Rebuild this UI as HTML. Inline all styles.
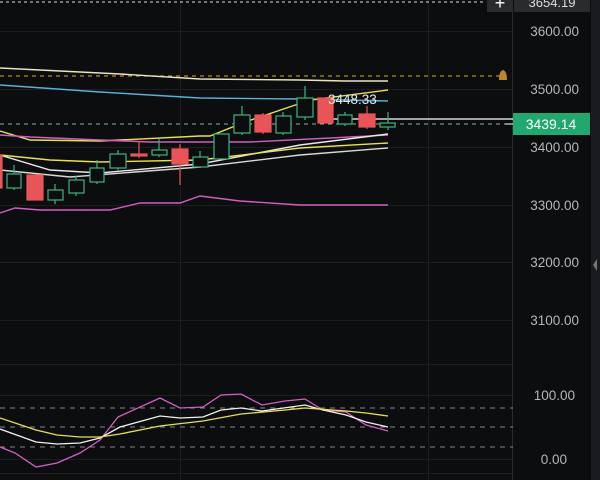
<!DOCTYPE html><html><head><style>body{margin:0;background:#0c0d0f;width:600px;height:480px;overflow:hidden;font-family:"Liberation Sans",sans-serif}</style></head><body>
<svg width="600" height="480" xmlns="http://www.w3.org/2000/svg" style="display:block">
<rect width="600" height="480" fill="#0c0d0f"/>
<g stroke="#1c1d20" stroke-width="1">
<line x1="0" y1="31.5" x2="513" y2="31.5"/><line x1="0" y1="89.5" x2="513" y2="89.5"/><line x1="0" y1="147.5" x2="513" y2="147.5"/><line x1="0" y1="205.5" x2="513" y2="205.5"/><line x1="0" y1="262.5" x2="513" y2="262.5"/><line x1="0" y1="320.5" x2="513" y2="320.5"/>
<line x1="0" y1="364.5" x2="513" y2="364.5"/><line x1="0" y1="395.5" x2="513" y2="395.5"/><line x1="0" y1="459.5" x2="513" y2="459.5"/><line x1="0" y1="473.5" x2="513" y2="473.5"/>
<line x1="180.5" y1="0" x2="180.5" y2="480"/><line x1="428.5" y1="0" x2="428.5" y2="480"/>
</g>
<line x1="512.5" y1="0" x2="512.5" y2="480" stroke="#2a2b2e"/>
<line x1="0" y1="2" x2="485" y2="2" stroke="#ddd" stroke-dasharray="3,3"/>
<rect x="487" y="-4" width="26" height="16" fill="#2a2b2e"/><text x="500" y="9" fill="#fff" font-size="18" text-anchor="middle">+</text>
<rect x="514" y="-4" width="76" height="16" fill="#2a2b2e"/><text x="552" y="7" fill="#ddd" font-size="13" text-anchor="middle">3654.19</text>
<rect x="591" y="0" width="9" height="480" fill="#1a1b1e"/><path d="M597 259 L593 265 L597 271Z" fill="#777"/>
<g fill="#b4b6ba" font-size="13.5" text-anchor="end">
<text x="579" y="36">3600.00</text><text x="579" y="94">3500.00</text><text x="579" y="152">3400.00</text><text x="579" y="210">3300.00</text><text x="579" y="267">3200.00</text><text x="579" y="325">3100.00</text><text x="575" y="400">100.00</text><text x="567" y="464">0.00</text>
</g>
<line x1="0" y1="76" x2="500" y2="76" stroke="#b8862b" stroke-dasharray="4,4" stroke-width="1.3"/>
<path d="M499 80 Q499 71 503 70 Q507 71 507 80Z" fill="#b8862b"/>
<line x1="0" y1="124" x2="513" y2="124" stroke="#7fb8a8" stroke-dasharray="4,4"/>
<g fill="none" stroke-width="1.4">
<polyline stroke="#e8e6c0" points="0,68 120,74 200,79 300,80 345,81 388,81"/>
<polyline stroke="#5ab0d8" points="0,85 100,92 200,98 300,99 388,101"/>
<polyline stroke="#e8e050" points="0,131 30,140 100,141 200,136 210,136 245,122 310,100 388,90"/>
<polyline stroke="#d060c0" points="0,135 30,137 100,140 150,142 250,142 330,138 388,135"/>
<polyline stroke="#e8e8e8" points="0,155 50,170 100,173 200,164 300,145 388,134"/>
<polyline stroke="#e8e050" points="0,155 50,160 100,162 200,160 300,148 388,143"/>
<polyline stroke="#d8d8d8" points="0,170 70,177 200,167 300,155 388,148"/>
<polyline stroke="#d060c0" points="0,213 15,208 40,210 110,210 140,203 180,203 200,196 240,201 300,205 388,205"/>
</g>
<line x1="325" y1="119" x2="513" y2="119" stroke="#fff" stroke-width="1.2"/>
<g stroke-width="1.2">
<g stroke="#3fb37f" fill="#0c0d0f">
<line x1="14" y1="165" x2="14" y2="190"/><rect x="7" y="174" width="14" height="14"/>
<line x1="55" y1="184" x2="55" y2="204"/><rect x="48" y="190" width="15" height="10"/>
<line x1="76" y1="176" x2="76" y2="196"/><rect x="69" y="180" width="15" height="13"/>
<line x1="97" y1="160" x2="97" y2="184"/><rect x="90" y="168" width="14" height="14"/>
<line x1="118" y1="150" x2="118" y2="170"/><rect x="110" y="154" width="16" height="14"/>
<line x1="159" y1="139" x2="159" y2="157"/><rect x="152" y="150" width="15" height="5"/>
<line x1="200" y1="151" x2="200" y2="168"/><rect x="193" y="157" width="15" height="10"/>
<rect x="214" y="134" width="15" height="25"/>
<line x1="242" y1="106" x2="242" y2="135"/><rect x="234" y="115" width="16" height="18"/>
<line x1="283" y1="112" x2="283" y2="135"/><rect x="276" y="116" width="15" height="17"/>
<line x1="305" y1="86" x2="305" y2="120"/><rect x="297" y="98" width="16" height="19"/>
<line x1="345" y1="112" x2="345" y2="126"/><rect x="338" y="115" width="14" height="9"/>
<line x1="388" y1="112" x2="388" y2="130"/><rect x="380" y="123" width="15" height="4"/>
</g>
<g fill="#e85458" stroke="#e85458">
<rect x="-2" y="155" width="4" height="33"/>
<rect x="27" y="175" width="16" height="25"/>
<line x1="139" y1="141" x2="139" y2="158"/><rect x="131" y="154" width="16" height="2"/>
<line x1="180" y1="144" x2="180" y2="185"/><rect x="172" y="149" width="16" height="15"/>
<line x1="263" y1="113" x2="263" y2="134"/><rect x="255" y="115" width="16" height="17"/>
<rect x="318" y="98" width="15" height="25"/>
<line x1="367" y1="106" x2="367" y2="129"/><rect x="359" y="114" width="16" height="13"/>
</g></g>
<text x="328" y="104" fill="#e8e8e8" font-size="13.5">3448.33</text>
<rect x="513" y="113" width="77" height="22" fill="#22a86e"/>
<line x1="505" y1="124" x2="513" y2="124" stroke="#fff"/>
<text x="551" y="129" fill="#fff" font-size="14" text-anchor="middle">3439.14</text>
<g stroke="#888" stroke-dasharray="5,5"><line x1="0" y1="408" x2="513" y2="408"/><line x1="0" y1="427" x2="513" y2="427"/><line x1="0" y1="447" x2="513" y2="447"/></g>
<g fill="none" stroke-width="1.3">
<polyline stroke="#d060c0" points="0,447 15,453 36,467 57,463 80,453 100,440 118,417 160,398 180,408 203,407 221,395 241,394 262,405 285,401 305,399 323,410 346,412 366,425 388,431"/>
<polyline stroke="#f0f0f0" points="0,429 36,442 57,444 80,443 100,438 120,427 160,416 180,418 203,417 221,410 241,408 262,411 305,405 323,410 346,415 366,422 388,427"/>
<polyline stroke="#e8e050" points="0,418 36,430 57,435 80,437 100,437 120,434 160,426 203,421 241,414 285,410 305,408 346,411 366,413 388,416"/>
</g>
</svg></body></html>
